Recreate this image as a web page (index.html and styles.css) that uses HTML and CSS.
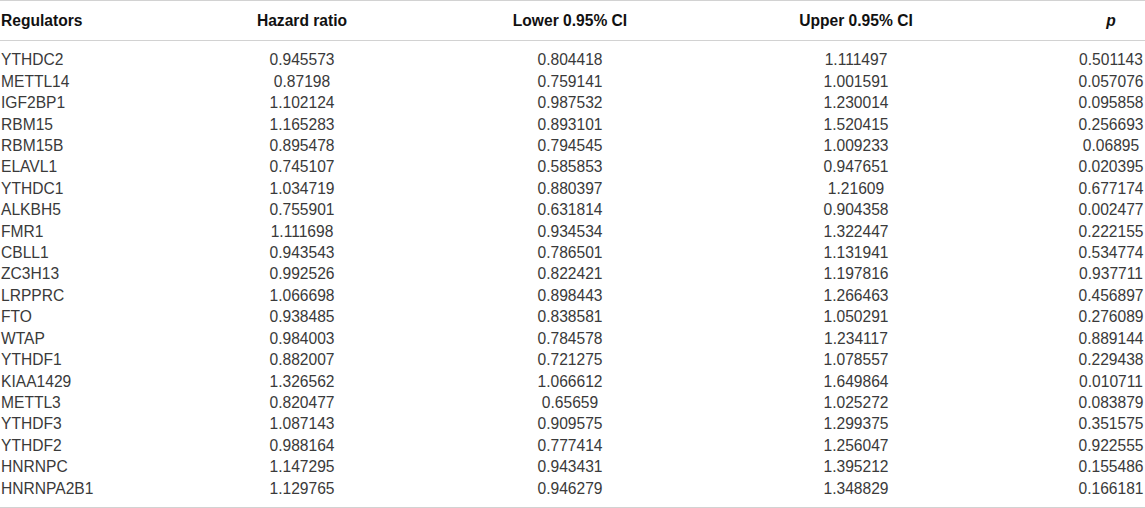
FILE: index.html
```html
<!DOCTYPE html>
<html>
<head>
<meta charset="utf-8">
<link rel="stylesheet" href="styles.css">
</head>
<body>
<table class="data">
<colgroup>
<col class="c1"><col class="c2"><col class="c3"><col class="c4"><col class="c5">
</colgroup>
<thead>
<tr><th class="left">Regulators</th><th>Hazard ratio</th><th>Lower 0.95% CI</th><th>Upper 0.95% CI</th><th><i>p</i></th></tr>
</thead>
<tbody>
<tr><td class="left">YTHDC2</td><td>0.945573</td><td>0.804418</td><td>1.111497</td><td>0.501143</td></tr>
<tr><td class="left">METTL14</td><td>0.87198</td><td>0.759141</td><td>1.001591</td><td>0.057076</td></tr>
<tr><td class="left">IGF2BP1</td><td>1.102124</td><td>0.987532</td><td>1.230014</td><td>0.095858</td></tr>
<tr><td class="left">RBM15</td><td>1.165283</td><td>0.893101</td><td>1.520415</td><td>0.256693</td></tr>
<tr><td class="left">RBM15B</td><td>0.895478</td><td>0.794545</td><td>1.009233</td><td>0.06895</td></tr>
<tr><td class="left">ELAVL1</td><td>0.745107</td><td>0.585853</td><td>0.947651</td><td>0.020395</td></tr>
<tr><td class="left">YTHDC1</td><td>1.034719</td><td>0.880397</td><td>1.21609</td><td>0.677174</td></tr>
<tr><td class="left">ALKBH5</td><td>0.755901</td><td>0.631814</td><td>0.904358</td><td>0.002477</td></tr>
<tr><td class="left">FMR1</td><td>1.111698</td><td>0.934534</td><td>1.322447</td><td>0.222155</td></tr>
<tr><td class="left">CBLL1</td><td>0.943543</td><td>0.786501</td><td>1.131941</td><td>0.534774</td></tr>
<tr><td class="left">ZC3H13</td><td>0.992526</td><td>0.822421</td><td>1.197816</td><td>0.937711</td></tr>
<tr><td class="left">LRPPRC</td><td>1.066698</td><td>0.898443</td><td>1.266463</td><td>0.456897</td></tr>
<tr><td class="left">FTO</td><td>0.938485</td><td>0.838581</td><td>1.050291</td><td>0.276089</td></tr>
<tr><td class="left">WTAP</td><td>0.984003</td><td>0.784578</td><td>1.234117</td><td>0.889144</td></tr>
<tr><td class="left">YTHDF1</td><td>0.882007</td><td>0.721275</td><td>1.078557</td><td>0.229438</td></tr>
<tr><td class="left">KIAA1429</td><td>1.326562</td><td>1.066612</td><td>1.649864</td><td>0.010711</td></tr>
<tr><td class="left">METTL3</td><td>0.820477</td><td>0.65659</td><td>1.025272</td><td>0.083879</td></tr>
<tr><td class="left">YTHDF3</td><td>1.087143</td><td>0.909575</td><td>1.299375</td><td>0.351575</td></tr>
<tr><td class="left">YTHDF2</td><td>0.988164</td><td>0.777414</td><td>1.256047</td><td>0.922555</td></tr>
<tr><td class="left">HNRNPC</td><td>1.147295</td><td>0.943431</td><td>1.395212</td><td>0.155486</td></tr>
<tr><td class="left">HNRNPA2B1</td><td>1.129765</td><td>0.946279</td><td>1.348829</td><td>0.166181</td></tr>
</tbody>
</table>
</body>
</html>
```
FILE: styles.css
```css
html, body {
  margin: 0;
  padding: 0;
  background: #ffffff;
}

.data {
  width: 1145px;
  table-layout: fixed;
  border-collapse: collapse;
  font-family: "Liberation Sans", Arial, sans-serif;
  font-size: 15.6px;
  line-height: 21.4px;
  color: #3a3a3a;
}

.c1 { width: 99px; }
.c2 { width: 406px; }
.c3 { width: 130px; }
.c4 { width: 442px; }
.c5 { width: 68px; }

.data thead tr {
  border-top: 1px solid #d2d2d2;
  border-bottom: 1px solid #d2d2d2;
}

.data th {
  font-weight: bold;
  color: #111111;
  text-align: center;
  padding: 9px 1px 9px 1px;
  white-space: nowrap;
}

.data td {
  text-align: center;
  padding: 0 1px;
  white-space: nowrap;
}

.data .left {
  text-align: left;
  padding-left: 1px;
}

.data tbody tr:first-child td {
  padding-top: 8px;
}

.data tbody tr:last-child td {
  padding-bottom: 8px;
}

.data tbody tr:last-child {
  border-bottom: 1px solid #d2d2d2;
}
```
